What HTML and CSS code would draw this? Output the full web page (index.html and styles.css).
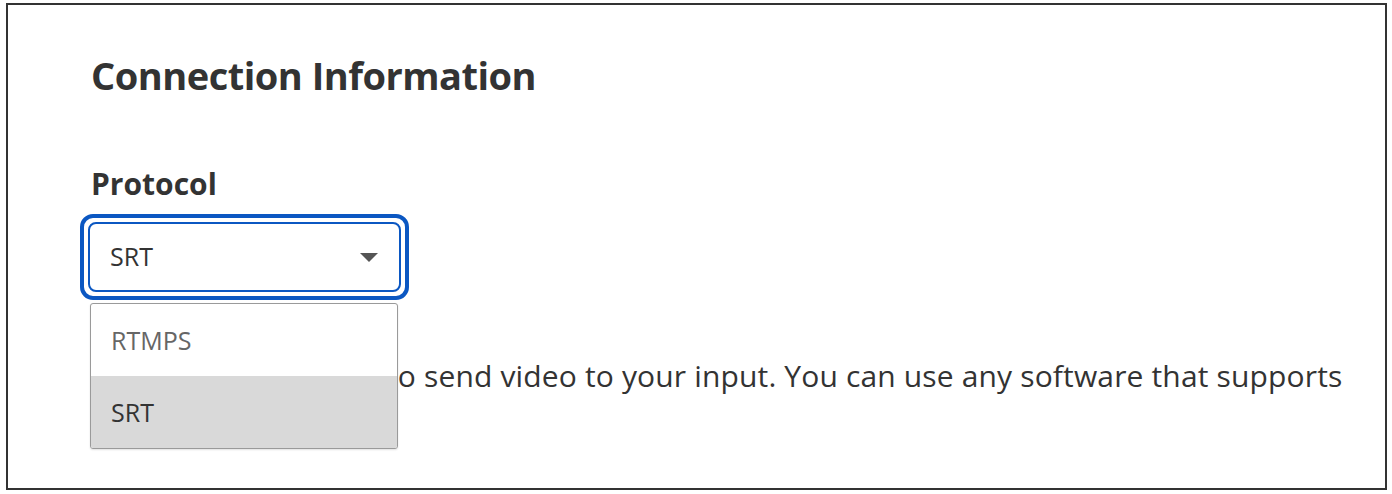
FILE: index.html
```html
<!DOCTYPE html>
<html lang="en">
<head>
<meta charset="utf-8">
<title>Connection Information</title>
<link rel="stylesheet" href="styles.css">
</head>
<body>
<div class="frame">
  <h2 class="title">Connection Information</h2>
  <div class="field">
    <label class="label">Protocol</label>
    <div class="select-wrap">
      <div class="select">
        <div class="select-inner">
          <span class="select-value">SRT</span>
        </div>
        <svg class="caret" width="18" height="9" viewBox="0 0 18 9"><path d="M0 0 H18 L9 9 Z" fill="#555"/></svg>
      </div>
      <ul class="menu">
        <li class="option">RTMPS</li>
        <li class="option selected">SRT</li>
      </ul>
    </div>
  </div>
  <p class="desc">Use this information to send video to your input. You can use any software that supports SRT.</p>
</div>
</body>
</html>
```
FILE: styles.css
```css
* { box-sizing: border-box; }
html, body { margin: 0; padding: 0; background: #fff; }
body { font-family: "Open Sans", "Noto Sans", sans-serif; color: #333; }
.frame {
  margin: 3px 5px 0 6px;
  height: 487px;
  border: 2px solid #333;
  padding: 44px 0 0 83px;
  overflow: hidden;
}
.title {
  margin: 0;
  font-size: 38px;
  letter-spacing: -0.5px;
  font-weight: 700;
  line-height: 52px;
  color: #333;
}
.field { margin-top: 63px; }
.label {
  display: block;
  font-size: 30px;
  font-weight: 700;
  line-height: 40px;
  color: #333;
}
.select-wrap {
  position: relative;
  margin: 10px 0 0 -11px;
  width: 329px;
}
.select {
  position: relative;
  border: 4px solid #0b57c2;
  border-radius: 13px;
  padding: 4px;
  height: 86px;
  display: flex;
}
.select-inner {
  flex: 1;
  display: flex;
  align-items: center;
  border: 2px solid #0b57c2;
  border-radius: 8px;
  padding: 0 20px 3px 20px;
}
.select-value {
  font-size: 25px;
  color: #333;
}
.caret { position: absolute; right: 27px; top: 35px; }
.menu {
  position: absolute;
  left: 10px;
  top: 89px;
  width: 308px;
  margin: 0;
  padding: 0;
  list-style: none;
  border: 1px solid #9a9a9a;
  border-radius: 3px;
  background: #fff;
  overflow: hidden;
  box-shadow: 0 1px 2px rgba(0,0,0,0.12);
}
.option {
  height: 72px;
  display: flex;
  align-items: center;
  padding: 0 20px;
  font-size: 25px;
  color: #666;
}
.option.selected { background: #d9d9d9; color: #333; }
.desc {
  margin: 56px 0 0 0;
  width: 1272px;
  font-size: 30px;
  line-height: 40px;
  letter-spacing: 0.15px;
  color: #333;
}
```
